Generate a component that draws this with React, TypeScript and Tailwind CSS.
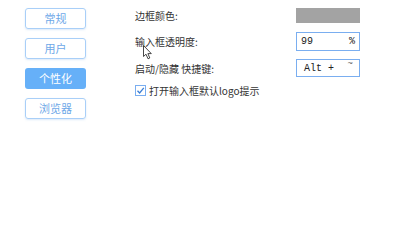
const navItems = ["常规", "用户", "个性化", "浏览器"];

export default function App() {
  return (
    <div className="relative w-[400px] h-[247px] bg-white flex font-['Noto_Sans_CJK_SC','Noto_Sans',sans-serif] text-[10px] text-[#333]">
      <nav className="w-[135px] pl-[25px] pt-[8px] flex flex-col gap-[9px]">
        {navItems.map((item) => (
          <div
            key={item}
            className={
              item === "个性化"
                ? "w-[61px] h-[21px] rounded-[3px] bg-[#66b0f8] text-white flex items-center justify-center text-[11px]"
                : "w-[61px] h-[21px] rounded-[3px] border border-[#a9cff8] text-[#6ea8e8] flex items-center justify-center text-[11px] shadow-[0_1px_2px_rgba(120,170,230,0.25)]"
            }
          >
            {item}
          </div>
        ))}
      </nav>

      <section className="w-[225px] pt-[8px] flex flex-col">
        <div className="h-[15px] flex items-center justify-between">
          <span>边框颜色:</span>
          <div className="w-[64px] h-[15px] bg-[#a3a3a3]" />
        </div>

        <div className="mt-[9px] h-[19px] flex items-center justify-between">
          <span>输入框透明度:</span>
          <div className="w-[64px] h-[19px] border border-[#7aaef0] flex items-center justify-between px-[4px] font-['Liberation_Mono',monospace] text-[10px] text-[#222]">
            <span>99</span>
            <span>%</span>
          </div>
        </div>

        <div className="mt-[8px] h-[18px] flex items-center justify-between">
          <span>启动/隐藏 快捷键:</span>
          <div className="w-[64px] h-[18px] border border-[#7aaef0] flex items-center justify-between pl-[7px] pr-[6px] font-['Liberation_Mono',monospace] text-[10px] text-[#222]">
            <span>Alt +</span>
            <span className="text-[9px] -mt-[6px] text-[#555]">~</span>
          </div>
        </div>

        <label className="mt-[7px] h-[12px] flex items-center gap-[3px]">
          <span className="w-[11px] h-[11px] border border-[#7aaef0] bg-white flex items-center justify-center">
            <svg width="9" height="9" viewBox="0 0 9 9">
              <path d="M1.5 4.8 L3.6 7 L7.8 1.8" fill="none" stroke="#3b7fd6" strokeWidth="1.3" />
            </svg>
          </span>
          <span>打开输入框默认logo提示</span>
        </label>
      </section>

      <svg className="absolute left-[143px] top-[45px]" width="10" height="15" viewBox="0 0 10 15">
        <path d="M0.5 0.5 L0.5 11.5 L3 9.2 L5 13.8 L6.8 13 L4.9 8.6 L8.3 8.6 Z" fill="#fff" stroke="#333" strokeWidth="0.9" strokeLinejoin="round" />
      </svg>
    </div>
  );
}
